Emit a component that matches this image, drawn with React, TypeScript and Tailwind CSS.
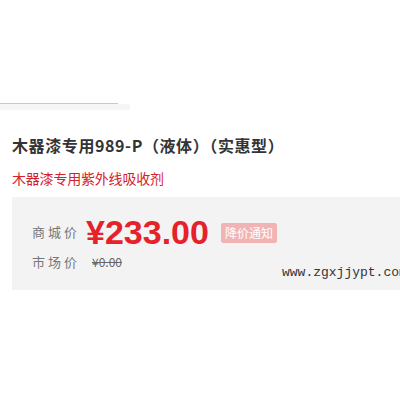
export default function App() {
  return (
    <div className="relative h-[400px] w-[400px] overflow-hidden bg-white font-['Noto_Sans_CJK_SC',sans-serif]">
      <div className="h-[103px]" />
      <div className="flex h-[8px] flex-col">
        <div className="h-px w-[118px] bg-[#c9c9c9]" />
        <div className="h-[6px] w-[130px] bg-[#f6f6f6]" />
      </div>
      <div className="px-3 pt-[22px]">
        <h1 className="text-[16px] font-bold leading-[24px] text-[#333] tracking-[0.6px]">
          木器漆专用989-P（液体）（实惠型）
        </h1>
        <p className="mt-[11px] text-[14px] leading-[20px] tracking-[-0.2px] text-[#d2232a]">
          木器漆专用紫外线吸收剂
        </p>
      </div>
      <div className="ml-3 mt-[9px] h-[93px] bg-[#f3f3f3] pl-5 pt-[18px]">
        <div className="flex h-[34px] items-center">
          <span className="w-[54px] text-[13px] tracking-[3px] text-[#777]">商城价</span>
          <span className="font-['Liberation_Sans',sans-serif] text-[34px] font-bold leading-[34px] text-[#e52129]">
            ¥233.00
          </span>
          <span className="ml-[12px] mt-[2px] rounded-[2px] bg-[#f1b4b4] px-[4px] text-[12px] leading-[20px] text-white">
            降价通知
          </span>
        </div>
        <div className="mt-[3px] flex h-[20px] items-center">
          <span className="w-[60px] text-[13px] tracking-[3px] text-[#777]">市场价</span>
          <span className="text-[12px] text-[#666] line-through">¥0.00</span>
        </div>
      </div>
      <div className="absolute left-[282px] top-[263px] whitespace-nowrap font-['Liberation_Mono',monospace] text-[13px] text-[#333]">
        www.zgxjjypt.com
      </div>
    </div>
  );
}
